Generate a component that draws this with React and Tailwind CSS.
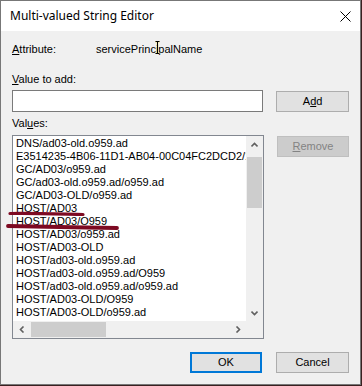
import React from "react";

const values = [
  "DNS/ad03-old.o959.ad",
  "E3514235-4B06-11D1-AB04-00C04FC2DCD2/19e6c7a2-4d51-4b8e-9a1f-0d3c6e2b7f40/o959.ad",
  "GC/AD03/o959.ad",
  "GC/ad03-old.o959.ad/o959.ad",
  "GC/AD03-OLD/o959.ad",
  "HOST/AD03",
  "HOST/AD03/O959",
  "HOST/AD03/o959.ad",
  "HOST/AD03-OLD",
  "HOST/ad03-old.o959.ad",
  "HOST/ad03-old.o959.ad/O959",
  "HOST/ad03-old.o959.ad/o959.ad",
  "HOST/AD03-OLD/O959",
  "HOST/AD03-OLD/o959.ad",
];

function Chevron({ dir }) {
  const pts = {
    up: "0.5,4.5 3.5,1.5 6.5,4.5",
    down: "0.5,1.5 3.5,4.5 6.5,1.5",
    left: "4.5,0.5 1.5,3.5 4.5,6.5",
    right: "1.5,0.5 4.5,3.5 1.5,6.5",
  };
  const vertical = dir === "up" || dir === "down";
  return (
    <svg
      width={vertical ? 7 : 6}
      height={vertical ? 6 : 7}
      viewBox={vertical ? "0 0 7 6" : "0 0 6 7"}
    >
      <polyline points={pts[dir]} fill="none" stroke="#606060" strokeWidth="1.6" />
    </svg>
  );
}

function Button({ children, className = "", disabled }) {
  return (
    <div
      className={
        "flex items-center justify-center h-[21px] border " +
        (disabled
          ? "bg-[#cccccc] border-[#bfbfbf] text-[#838383] "
          : "bg-[#e1e1e1] border-[#adadad] text-black ") +
        className
      }
    >
      {children}
    </div>
  );
}

export default function App() {
  return (
    <div className="relative w-[362px] h-[386px] bg-[#3a2020] font-['Liberation_Sans',Arial,sans-serif] text-[11px] leading-[13px] text-black">
      <div className="w-[361px] h-[385px] border border-[#777777] bg-[#f0f0f0] flex flex-col">
        {/* title bar */}
        <div className="h-[30px] bg-white flex items-center justify-between pl-[9px] pr-[9px]">
          <span className="font-['Noto_Sans',sans-serif] text-[12px] leading-[16px]">
            Multi-valued String Editor
          </span>
          <svg width="11" height="11" viewBox="0 0 11 11">
            <path d="M0.5 0.5 L10.5 10.5 M10.5 0.5 L0.5 10.5" stroke="#000" strokeWidth="1" />
          </svg>
        </div>

        {/* body */}
        <div className="flex flex-col px-[11px]">
          <div className="flex mt-[12px]">
            <span className="w-[84px]">
              <u>A</u>ttribute:
            </span>
            <span className="relative">
              servicePrincipalName
              <svg
                className="absolute left-[59px] top-[-2px]"
                width="5"
                height="13"
                viewBox="0 0 5 13"
              >
                <path d="M0 0.5 H5 M2.5 0.5 V12.5 M0 12.5 H5" stroke="#f2e6a0" strokeWidth="2" />
                <path d="M0.5 0.5 H4.5 M2.5 0.5 V12.5 M0.5 12.5 H4.5" stroke="#000" strokeWidth="1" />
              </svg>
            </span>
          </div>

          <div className="mt-[17px]">
            <u>V</u>alue to add:
          </div>

          <div className="flex items-start mt-[4px]">
            <div className="w-[252px] h-[22px] border border-[#7a7a7a] bg-white" />
            <Button className="w-[73px] ml-[13px] mt-[1px]">
              A<u>d</u>d
            </Button>
          </div>

          <div className="mt-[5px]">
            Val<u>u</u>es:
          </div>

          <div className="flex items-start mt-[5px]">
            <div className="w-[252px] h-[204px] border border-[#828790] bg-white grid grid-cols-[233px_17px] grid-rows-[185px_17px]">
              <div className="overflow-hidden pl-[3px] pt-[1px]">
                {values.map((v) => (
                  <div key={v} className="h-[13px] whitespace-nowrap">
                    {v}
                  </div>
                ))}
              </div>

              <div className="bg-[#f0f0f0] flex flex-col">
                <div className="h-[17px] flex items-center justify-center">
                  <Chevron dir="up" />
                </div>
                <div className="flex-1 px-[1px]">
                  <div className="mt-[4px] h-[51px] bg-[#cdcdcd]" />
                </div>
                <div className="h-[17px] flex items-center justify-center">
                  <Chevron dir="down" />
                </div>
              </div>

              <div className="bg-[#f0f0f0] flex">
                <div className="w-[17px] flex items-center justify-center">
                  <Chevron dir="left" />
                </div>
                <div className="flex-1 py-[1px]">
                  <div className="ml-[1px] w-[75px] h-full bg-[#cdcdcd]" />
                </div>
                <div className="w-[17px] flex items-center justify-center">
                  <Chevron dir="right" />
                </div>
              </div>

              <div className="bg-[#f0f0f0]" />
            </div>
            <Button disabled className="w-[73px] ml-[13px] mt-[1px]">
              <u>R</u>emove
            </Button>
          </div>

          <div className="flex justify-end mt-[13px]">
            <div className="w-[72px] h-[21px] border-2 border-[#0078d7] bg-[#e1e1e1] flex items-center justify-center">
              OK
            </div>
            <Button className="w-[73px] ml-[14px]">Cancel</Button>
          </div>
        </div>
      </div>

      {/* hand-drawn annotation strokes */}
      <svg className="absolute left-0 top-0 pointer-events-none" width="362" height="386">
        <path
          d="M10 213.5 C 30 213, 60 214, 83 214.5"
          stroke="#7d0a22"
          strokeWidth="3.2"
          strokeLinecap="round"
          fill="none"
        />
        <path
          d="M8 226 C 40 226.5, 80 227.5, 117 228"
          stroke="#7d0a22"
          strokeWidth="3.8"
          strokeLinecap="round"
          fill="none"
        />
      </svg>
    </div>
  );
}
